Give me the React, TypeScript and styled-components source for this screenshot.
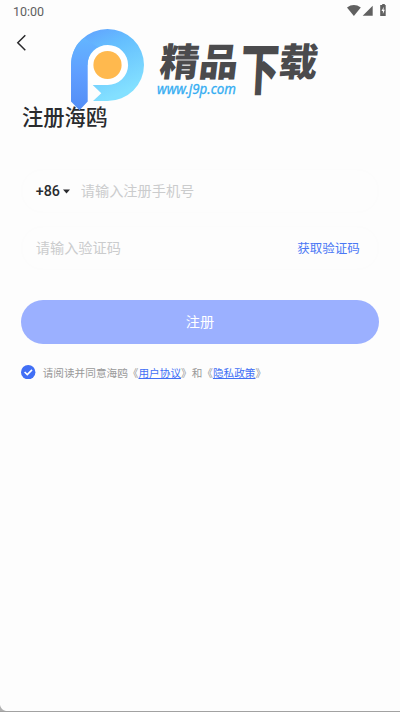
import React from "react";
import styled, { createGlobalStyle } from "styled-components";

const GlobalStyle = createGlobalStyle`
  * { box-sizing: border-box; }
  body {
    margin: 0;
    background: #fdfdfd;
    font-family: Roboto, "Noto Sans CJK SC", sans-serif;
    color: #2a2b2e;
  }
  button, input { font: inherit; border: 0; padding: 0; background: none; }
`;

const Screen = styled.main`
  position: relative;
  display: flex;
  flex-direction: column;
  height: 712px;
  overflow: hidden;
  border-bottom: 1px solid #a2a2a2;
`;

const StatusBar = styled.header`
  display: flex;
  justify-content: space-between;
  height: 24px;
  padding: 0 13px;
  font-size: 12.5px;
  line-height: 23px;
  color: #606060;
`;

const StatusIcons = styled.svg`
  width: 42px;
  height: 24px;
  margin-right: -1px;
`;

const NavBar = styled.nav`
  display: flex;
  height: 38px;
  padding-left: 15px;
`;

const BackButton = styled.button`
  width: 12px;
  height: 38px;
  svg { display: block; }
`;

const Title = styled.h1`
  margin: 39px 0 0 22px;
  height: 33px;
  font-size: 21.3px;
  line-height: 33px;
  font-weight: 500;
`;

const Form = styled.form`
  display: flex;
  flex-direction: column;
  padding: 35px 21.3px 0 21.3px;
`;

const Field = styled.div<{ $gap: number }>`
  display: flex;
  align-items: center;
  height: 44px;
  margin-bottom: ${({ $gap }) => $gap}px;
  padding: 0 19px 0 14.5px;
  border-radius: 22px;
  border: 1px solid #fcfcfc;
`;

const CountryCode = styled.button`
  display: flex;
  align-items: center;
  width: 46px;
  margin-left: -1px;
  font-size: 14.3px;
  font-weight: 500;
  color: #2a2b2e;
  svg { margin-left: 3px; }
`;

const Input = styled.input`
  flex: 1;
  min-width: 0;
  height: 30px;
  margin-left: -1px;
  outline: 0;
  font-size: 14.2px;
  &::placeholder { color: #cbcccd; opacity: 1; }
`;

const CodeButton = styled.button`
  margin: -2px -1px 0 0;
  font-size: 12.5px;
  color: #4b78f5;
`;

const SubmitButton = styled.button`
  height: 44.3px;
  padding-bottom: 2px;
  border-radius: 22.2px;
  background: #9bb0ff;
  color: #fff;
  font-size: 14.2px;
`;

const Agreement = styled.div`
  display: flex;
  align-items: center;
  margin-top: 17.5px;
  height: 22px;
  font-size: 10.65px;
  color: #999;
  white-space: nowrap;
  svg { margin-right: 7px; }
  span { margin-top: 1px; }
`;

const Link = styled.a`
  color: #416ff5;
  text-decoration: underline;
  text-underline-offset: 1px;
`;

const Watermark = styled.svg`
  position: absolute;
  left: 65px;
  top: 24px;
  width: 260px;
  height: 90px;
  pointer-events: none;
`;

const BrandText = styled.text`
  font-family: "Noto Sans CJK SC", sans-serif;
  font-weight: 900;
  font-size: 40px;
  fill: #4b4b4d;
`;

const SiteText = styled.text`
  font-family: "Noto Sans", sans-serif;
  font-style: italic;
  font-size: 13.5px;
  fill: #35adf2;
  stroke: #35adf2;
  stroke-width: 0.3px;
`;

const Corner = styled.svg`
  position: absolute;
  left: 0;
  bottom: 0;
`;

function SiteWatermark() {
  return (
    <Watermark viewBox="65 24 260 90">
      <defs>
        <linearGradient id="bowl" x1="0" y1="0" x2="0.45" y2="1">
          <stop offset="0" stopColor="#609bff" />
          <stop offset="0.4" stopColor="#65bffe" />
          <stop offset="1" stopColor="#83e0ff" />
        </linearGradient>
        <linearGradient id="stem" x1="0" y1="0" x2="0" y2="1">
          <stop offset="0" stopColor="#63b5ff" />
          <stop offset="0.5" stopColor="#609eff" />
          <stop offset="1" stopColor="#528df5" />
        </linearGradient>
      </defs>
      <circle cx="107.5" cy="65" r="25" fill="#fff" />
      <path d="M71 65A36.5 36 0 1 1 107.5 101H93L101.3 93.2L92.7 85H107.5A20.3 20 0 1 0 87.5 65Z" fill="url(#bowl)" />
      <path d="M71 65C71 54 76 43 84 38L98 47C91 50 87.7 57 87.7 65V101.5L79.5 110.3L71 101.5Z" fill="url(#stem)" />
      <circle cx="107.5" cy="65" r="14.1" fill="#ffb94e" />
      <BrandText transform="translate(158.5 76.3) skewX(-7) scale(.98 .96)">精品</BrandText>
      <BrandText transform="translate(239.5 90) skewX(-3) scale(.97 1.41)">下</BrandText>
      <BrandText transform="translate(277.5 76.3) skewX(-7) scale(.97 .96)">载</BrandText>
      <SiteText x="157" y="93.5" textLength="79" lengthAdjust="spacingAndGlyphs">www.j9p.com</SiteText>
    </Watermark>
  );
}

export default function App() {
  return (
    <>
      <GlobalStyle />
      <Screen>
        <StatusBar>
          <span>10:00</span>
          <StatusIcons viewBox="0 0 42 24" fill="#606060">
            <path d="M1 7.4Q7.8 2.6 14.8 7.4L7.9 16Z" />
            <path d="M26.7 5.8V15.8H16.7Z" />
            <path d="M35.3 5H36.2V4H38.8V5H39.7V16H34.2V5Z" />
            <path d="M37.8 6.8L35.5 11H36.9V14L38.8 9.8H37.5Z" fill="#fff" />
          </StatusIcons>
        </StatusBar>
        <NavBar>
          <BackButton aria-label="返回">
            <svg width="12" height="38" fill="none" stroke="#29292b" strokeWidth="1.5">
              <path d="M10.3 11.3L2.8 18.8L10.3 26.3" />
            </svg>
          </BackButton>
        </NavBar>
        <Title>注册海鸥</Title>
        <Form>
          <Field $gap={13}>
            <CountryCode type="button">
              +86
              <svg width="7" height="5" fill="#2a2b2e"><path d="M0 .5H7L3.5 4.5Z" /></svg>
            </CountryCode>
            <Input placeholder="请输入注册手机号" />
          </Field>
          <Field $gap={29.5}>
            <Input placeholder="请输入验证码" />
            <CodeButton type="button">获取验证码</CodeButton>
          </Field>
          <SubmitButton type="button">注册</SubmitButton>
          <Agreement>
            <svg width="14.4" height="14.4" viewBox="0 0 14 14">
              <circle cx="7" cy="7" r="7" fill="#416ff5" />
              <path d="M3.5 6.8L6.1 9.3L10.7 4.8" fill="none" stroke="#fff" strokeWidth="1.6" />
            </svg>
            <span>请阅读并同意海鸥《<Link>用户协议</Link>》和《<Link>隐私政策</Link>》</span>
          </Agreement>
        </Form>
        <SiteWatermark />
        <Corner width="6" height="6" fill="#b0b0b0"><path d="M0 0Q1 5 6 6H0Z" /></Corner>
      </Screen>
    </>
  );
}
